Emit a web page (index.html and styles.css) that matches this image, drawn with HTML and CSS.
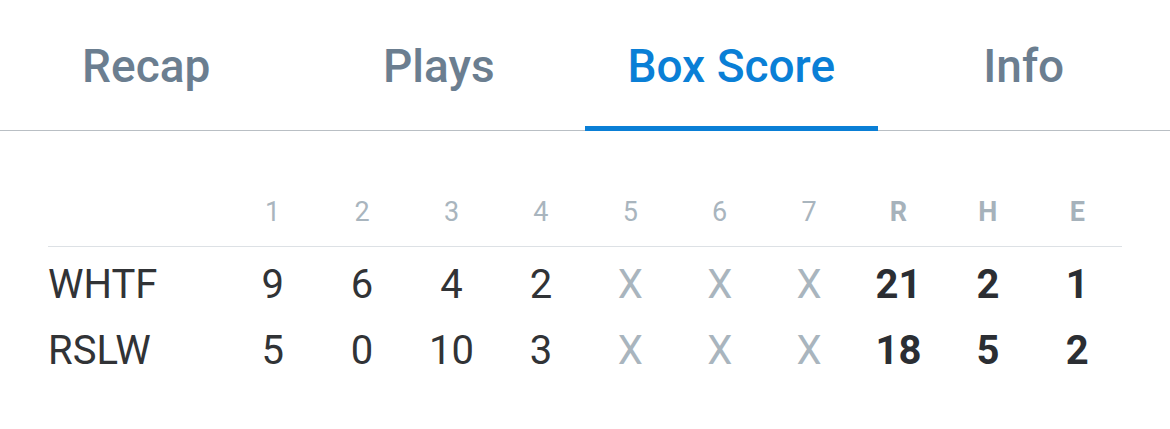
FILE: index.html
```html
<!DOCTYPE html>
<html>
<head>
<meta charset="utf-8">
<link rel="stylesheet" href="styles.css">
</head>
<body>
<nav class="tabs">
  <div class="tab">Recap</div>
  <div class="tab">Plays</div>
  <div class="tab active">Box Score</div>
  <div class="tab">Info</div>
</nav>
<div class="box">
  <div class="row head">
    <div class="name"></div>
    <div class="c">1</div><div class="c">2</div><div class="c">3</div><div class="c">4</div>
    <div class="c">5</div><div class="c">6</div><div class="c">7</div>
    <div class="c tot">R</div><div class="c tot">H</div><div class="c tot">E</div>
  </div>
  <div class="body">
    <div class="row">
      <div class="name">WHTF</div>
      <div class="c">9</div><div class="c">6</div><div class="c">4</div><div class="c">2</div>
      <div class="c x">X</div><div class="c x">X</div><div class="c x">X</div>
      <div class="c tot">21</div><div class="c tot">2</div><div class="c tot">1</div>
    </div>
    <div class="row">
      <div class="name">RSLW</div>
      <div class="c">5</div><div class="c">0</div><div class="c">10</div><div class="c">3</div>
      <div class="c x">X</div><div class="c x">X</div><div class="c x">X</div>
      <div class="c tot">18</div><div class="c tot">5</div><div class="c tot">2</div>
    </div>
  </div>
</div>
</body>
</html>
```
FILE: styles.css
```css
html, body {
  margin: 0;
  background: #ffffff;
  font-family: Roboto, "Liberation Sans", sans-serif;
}
.tabs {
  display: flex;
  border-bottom: 1px solid #b9bfc4;
}
.tab {
  flex: 1;
  text-align: center;
  font-size: 46px;
  font-weight: 500;
  line-height: 46px;
  color: #6b7e90;
  padding-top: 43px;
  padding-bottom: 37px;
  border-bottom: 5px solid transparent;
  margin-bottom: -1px;
}
.tab.active {
  color: #0a7fd6;
  border-bottom-color: #0a7fd6;
}
.box {
  width: 1074px;
  margin: 61px 0 0 48px;
}
.row {
  display: grid;
  grid-template-columns: 180px repeat(10, 1fr);
}
.head {
  font-size: 27px;
  line-height: 40px;
  color: #a9b5be;
  padding-bottom: 14px;
  border-bottom: 1px solid #dde1e5;
}
.head .tot {
  font-weight: 700;
  color: #a6b2bb;
}
.body {
  padding-top: 5px;
}
.body .row {
  font-size: 40px;
  line-height: 66px;
  color: #313336;
}
.c {
  text-align: center;
}
.body .x {
  color: #a9b5be;
}
.body .tot {
  font-weight: 700;
  color: #2b2e33;
}
```
